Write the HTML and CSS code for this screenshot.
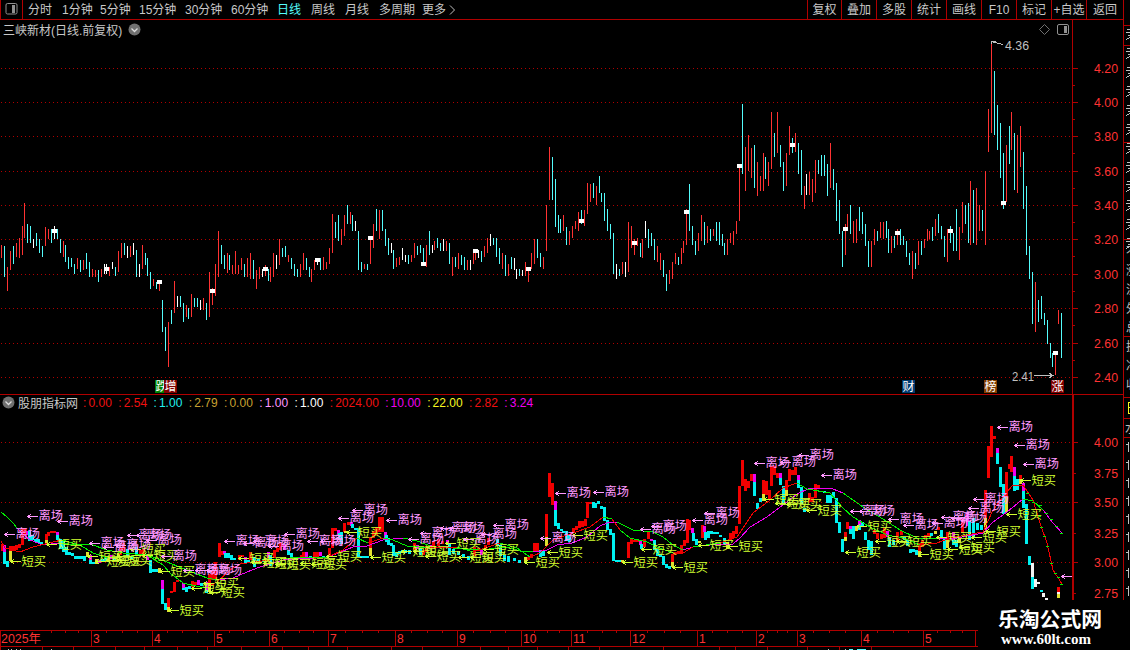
FILE: index.html
```html
<!DOCTYPE html>
<html lang="zh-CN">
<head>
  <meta charset="UTF-8">
  <title>三峡新材 日线</title>
  <link rel="stylesheet" href="styles.css">
</head>
<body>
  <div class="app">
    <div class="main">
      <!-- Toolbar -->
      <div class="toolbar">
        <div class="layout-btn">
          <svg width="13" height="12" viewBox="0 0 13 12"><rect x="1" y="0.5" width="11" height="10.5" rx="1.5" fill="none" stroke="#909090"/><rect x="7" y="2" width="3" height="8" fill="#909090"/></svg>
        </div>
        <div class="periods">
          <span class="p2">分时</span>
          <span class="p3">1分钟</span>
          <span class="p4">5分钟</span>
          <span class="p5">15分钟</span>
          <span class="p5">30分钟</span>
          <span class="p5">60分钟</span>
          <span class="p2 active">日线</span>
          <span class="p2">周线</span>
          <span class="p2">月线</span>
          <span class="p6">多周期</span>
          <span class="more">更多</span>
          <svg width="7" height="12" viewBox="0 0 7 12"><path d="M1 1.5L5.5 6L1 10.5" fill="none" stroke="#c0c0c0"/></svg>
        </div>
        <div class="tools">
          <span class="first">复权</span>
          <span>叠加</span>
          <span>多股</span>
          <span>统计</span>
          <span>画线</span>
          <span>F10</span>
          <span>标记</span>
          <span>+自选</span>
          <span class="last">返回</span>
        </div>
      </div>

      <!-- Price chart -->
      <div class="title-row">
        <div class="title">
          <span class="name">三峡新材(日线.前复权)</span>
          <svg width="13" height="13" viewBox="0 0 13 13"><circle cx="6.5" cy="6.5" r="6" fill="#707070"/><path d="M3.5 5.5L6.5 8.5L9.5 5.5" fill="none" stroke="#ddd" stroke-width="1.3"/></svg>
          <svg class="corner" width="32" height="13" viewBox="0 0 32 13"><path d="M6.5 1.5L11.5 6.5L6.5 11.5L1.5 6.5Z" fill="none" stroke="#707070"/><rect x="19.5" y="1.5" width="11" height="10" rx="1.5" fill="none" stroke="#909090"/><rect x="26" y="3" width="3" height="7" fill="#909090"/></svg>
        </div>
      </div>
      <svg class="price" id="price" width="1123" height="357" viewBox="0 37 1123 357"></svg>

      <!-- Indicator chart -->
      <div class="ind-row">
        <div class="ind">
          <svg width="13" height="13" viewBox="0 0 13 13"><circle cx="6.5" cy="6.5" r="6" fill="#707070"/><path d="M3.5 5.5L6.5 8.5L9.5 5.5" fill="none" stroke="#ddd" stroke-width="1.3"/></svg>
          <span class="ind-name">股朋指标网</span>
          <span class="v red"><i>:</i>0.00</span>
          <span class="v red"><i>:</i>2.54</span>
          <span class="v cyan"><i>:</i>1.00</span>
          <span class="v gold"><i>:</i>2.79</span>
          <span class="v gold"><i>:</i>0.00</span>
          <span class="v pink"><i>:</i>1.00</span>
          <span class="v white"><i>:</i>1.00</span>
          <span class="v red"><i>:</i>2024.00</span>
          <span class="v magenta"><i>:</i>10.00</span>
          <span class="v yellow"><i>:</i>22.00</span>
          <span class="v red"><i>:</i>2.82</span>
          <span class="v magenta"><i>:</i>3.24</span>
        </div>
      </div>
      <svg class="indicator" id="indicator" width="1123" height="218" viewBox="0 412 1123 218"></svg>
      <svg class="time" id="time" width="1123" height="20" viewBox="0 630 1123 20"></svg>
    </div>
    <svg class="side" id="side" width="7" height="650" viewBox="1123 0 7 650"></svg>
  </div>

  <div class="watermark">
    <div class="wm-name">乐淘公式网</div>
    <div class="wm-url">www.60lt.com</div>
  </div>

  <script src="chart.js"></script>
</body>
</html>
```

FILE: styles.css
```css
* {
  margin: 0;
  padding: 0;
  box-sizing: border-box;
}

body {
  width: 1130px;
  height: 650px;
  background: #000;
  color: #c8c8c8;
  font-family: "Liberation Sans", "Noto Sans CJK SC", sans-serif;
  font-size: 12px;
  overflow: hidden;
}

svg {
  display: block;
  flex: none;
}

.app {
  display: flex;
  width: 1130px;
  height: 650px;
}

.main {
  width: 1123px;
  display: flex;
  flex-direction: column;
}

/* Toolbar */
.toolbar {
  display: flex;
  height: 20px;
  line-height: 18px;
  border-bottom: 1px solid #b00000;
  white-space: nowrap;
}

.layout-btn {
  width: 23px;
  padding: 3px 0 0 4px;
  border-left: 1px solid #b00000;
  border-right: 1px solid #b00000;
}

.periods {
  display: flex;
  align-items: center;
  width: 784px;
  padding-left: 5px;
}

.p2 { width: 34px; }
.p3 { width: 38px; }
.p4 { width: 39px; }
.p5 { width: 46px; }
.p6 { width: 43px; }
.more { width: 27px; }

.active {
  color: #54fcfc;
}

.tools {
  display: flex;
  line-height: 20px;
}

.tools span {
  width: 35px;
  height: 19px;
  border-left: 1px solid #b00000;
  text-align: center;
}

.tools .first { width: 34px; }
.tools .last { width: 37px; }

/* Chart headers */
.title-row {
  height: 17px;
}

.title {
  display: flex;
  align-items: center;
  width: 1073px;
  height: 17px;
  padding: 1px 2px 0 3px;
  border-right: 1px solid #b00000;
}

.name {
  width: 125px;
  white-space: nowrap;
}

.corner {
  margin-left: auto;
}

.ind-row {
  height: 18px;
  border-top: 1px solid #b00000;
}

.ind {
  display: flex;
  align-items: center;
  width: 1074px;
  height: 17px;
  padding: 0 0 2px 2px;
  border-right: 2px solid #b00000;
}

.ind-name {
  width: 68px;
  padding-left: 3px;
  white-space: nowrap;
}

.v {
  margin-right: 6.3px;
  letter-spacing: 0.05px;
}

.v i {
  margin-right: 2px;
  font-style: normal;
}

.red { color: #f01010; }
.cyan { color: #20f0f0; }
.gold { color: #c8a030; }
.pink { color: #ff98ff; }
.white { color: #fff; }
.magenta { color: #f000f0; }
.yellow { color: #f8f820; }

/* SVG charts */
.price, .indicator, .time, .side {
  shape-rendering: crispEdges;
}

.axis { fill: #ff3232; }
.note { fill: #c0c0c0; }
.sell { fill: #ff98ff; }
.buy { fill: #d0ff30; }
.mark { fill: #fff; }

.watermark {
  position: absolute;
  left: 978px;
  top: 600px;
  width: 152px;
  height: 50px;
  padding: 5px 0 0 20px;
  background: #000;
  color: #fff;
}

.wm-name {
  font: bold 20.8px/26px "Noto Sans CJK SC", sans-serif;
  white-space: nowrap;
}

.wm-url {
  padding: 1px 0 0 3px;
  font: bold 15px/14px "Liberation Serif", serif;
}
```

FILE: chart.js
```javascript
const COLORS = {
  r: '#ff3232', c: '#54fcfc', w: '#ffffff',
  R: '#f00000', C: '#00f0f0', M: '#f000f0', Y: '#e0e030', W: '#f4f4f4', G: '#00f000'
};
const LINE = '#b00000';

function rect(x, y, w, h, color) {
  return `<rect x="${x}" y="${y}" width="${w}" height="${h}" fill="${color}"/>`;
}

function text(x, y, str, cls, len) {
  const fit = len ? ` textLength="${len}" lengthAdjust="spacingAndGlyphs"` : '';
  return `<text x="${x}" y="${y}" class="${cls}"${fit}>${str}</text>`;
}

function grid(y) {
  return `<path d="M1 ${y + 0.5}H1071" stroke="${LINE}" stroke-dasharray="1 3"/>`;
}

// x, top, bottom, color
function bars(data, width) {
  return data.trim().split(/\s*,\s*/).map((s) => {
    const [x, a, b, c] = s.split(' ');
    return rect(x, a, width, b - a, COLORS[c]);
  }).join('');
}

/* Price chart */
const candles = `
1 245 258 r,4 246 277 c,7 267 291 r,10 251 270 r,13 246 264 c,16 243 257 r,19 238 258 r,22 226 255 r,24 203 238 r,27 224 243 c,
30 226 243 c,33 239 248 w,36 233 246 c,39 239 253 c,42 246 257 c,45 227 246 r,48 229 239 r,51 229 243 c,54 226 239 w,57 229 239 c,
60 239 253 c,63 241 257 r,65 245 262 c,68 257 269 c,71 258 267 c,74 264 274 c,77 258 269 r,80 260 272 c,83 260 270 r,86 253 269 c,
89 262 277 c,92 269 277 r,95 270 277 r,98 270 282 c,101 269 277 r,104 264 274 w,106 264 274 w,109 267 276 r,112 262 269 w,115 267 276 c,
118 251 272 r,121 243 258 r,124 243 255 c,127 246 258 w,130 246 257 r,133 243 255 w,136 250 277 c,139 264 277 w,142 245 269 r,145 253 265 c,
147 258 276 c,150 272 289 c,153 279 286 r,156 282 289 c,159 280 291 r,162 300 332 c,165 327 351 c,168 322 367 r,171 310 324 c,174 281 313 r,
177 296 307 w,180 296 307 c,183 303 322 c,186 305 317 r,188 308 319 c,191 294 317 r,194 298 307 c,197 298 307 c,200 300 310 w,203 298 310 r,
206 303 320 c,209 272 317 r,212 288 305 r,215 264 296 r,218 231 277 r,221 245 264 c,224 255 269 c,227 253 273 r,229 255 270 c,232 265 274 r,
235 251 274 r,238 265 274 r,241 258 270 r,244 264 277 c,247 258 277 r,250 253 279 r,253 260 279 c,256 270 289 r,259 267 279 r,262 269 277 w,
265 265 276 r,268 269 281 c,270 267 282 r,273 253 277 r,276 255 269 w,279 239 265 r,282 248 257 c,285 246 257 c,288 255 262 r,291 258 269 c,
294 264 276 c,297 269 277 c,300 264 277 r,303 253 270 r,306 258 270 c,309 267 277 c,311 269 282 r,314 260 270 r,317 258 265 w,320 258 270 c,
323 257 270 r,326 262 269 r,329 248 264 r,332 214 253 r,335 222 238 c,338 215 241 c,341 229 245 r,344 215 236 r,347 205 224 c,350 212 224 r,
352 215 231 c,355 221 231 w,358 231 270 c,361 262 272 c,364 264 269 r,367 264 270 c,370 238 264 r,373 224 248 r,376 209 231 c,379 210 239 r,
382 210 231 c,385 229 246 c,388 238 255 c,391 243 253 w,393 250 269 c,396 258 267 r,399 257 265 r,402 248 260 w,405 255 262 w,408 255 264 c,
411 255 262 r,414 243 258 r,417 246 255 c,420 245 253 c,423 248 266 c,426 245 267 r,429 231 255 c,432 245 253 w,434 241 250 r,437 238 248 c,
440 243 251 c,443 239 251 w,446 241 251 r,449 243 264 c,452 257 276 r,455 257 267 c,458 253 269 r,461 255 265 c,464 257 270 c,467 260 270 r,
470 260 270 w,473 250 264 r,475 249 260 r,478 250 258 w,481 251 262 c,484 246 257 r,487 238 253 r,490 234 246 w,493 238 245 c,496 238 257 c,
499 248 264 c,502 253 269 r,505 255 276 c,508 264 276 r,511 257 269 c,514 258 270 w,516 269 279 w,519 269 276 c,522 270 276 w,525 262 276 r,
528 270 282 r,531 253 269 r,534 239 264 r,537 239 258 c,540 253 267 c,543 257 269 r,546 205 251 r,549 147 200 r,552 157 200 c,555 179 227 c,
558 215 233 c,560 219 233 c,563 215 231 r,566 227 245 c,569 231 245 r,572 226 238 r,575 221 229 r,578 212 231 r,581 210 224 c,584 210 226 r,
587 183 214 r,590 184 202 r,593 183 198 c,596 186 205 r,599 176 193 c,601 193 202 c,604 193 221 c,607 209 231 c,610 224 239 c,613 233 274 c,
616 264 279 w,619 269 276 c,622 262 274 r,625 262 277 w,628 222 272 r,631 226 248 r,634 239 255 r,637 238 246 r,640 243 257 c,642 239 258 r,
645 221 238 w,648 229 248 c,651 233 246 c,654 239 260 c,657 246 262 r,660 253 270 r,663 260 277 c,666 274 291 c,669 270 284 r,672 262 279 r,
675 253 264 r,678 257 265 c,681 248 264 r,683 241 253 r,686 209 245 r,689 184 231 c,692 226 245 c,695 241 255 c,698 233 251 r,701 215 241 r,
704 222 245 c,707 226 243 r,710 229 241 c,713 229 236 r,716 222 241 c,719 222 245 c,722 234 246 c,724 243 255 c,727 239 255 r,730 233 243 r,
733 231 245 r,736 221 234 r,739 164 221 r,742 104 174 c,745 147 191 r,748 135 171 r,751 148 178 r,754 145 188 c,757 162 196 r,760 176 191 r,
763 153 191 r,765 157 179 c,768 162 186 r,771 112 169 r,774 133 157 c,777 112 153 r,780 145 167 c,783 162 191 c,786 153 186 r,789 126 155 r,
792 138 153 c,795 133 152 r,798 143 174 c,801 150 195 c,804 186 209 r,806 174 195 w,809 172 195 r,812 179 202 r,815 160 193 r,818 160 174 c,
821 155 176 c,824 155 176 c,827 164 196 c,830 143 188 r,833 169 190 c,836 183 221 c,839 200 234 c,842 231 267 c,845 224 255 r,847 214 229 r,
850 205 234 c,853 221 243 r,856 219 243 r,859 207 231 c,862 212 234 c,865 224 246 c,868 241 267 c,871 241 267 r,874 229 245 r,877 231 241 c,
880 222 238 r,883 222 239 r,886 221 238 c,888 229 253 c,891 236 253 r,894 236 248 c,897 229 245 r,900 229 245 c,903 236 245 c,906 241 257 c,
909 253 265 c,912 251 279 r,915 253 269 c,918 241 265 r,921 241 255 c,924 239 248 r,927 229 241 r,929 231 239 r,932 227 241 c,935 219 236 r,
938 214 233 c,941 226 239 c,944 236 257 c,947 229 262 r,950 226 243 c,953 233 251 c,956 209 251 c,959 227 260 r,962 202 233 r,965 205 224 c,
968 203 243 c,970 181 245 r,973 190 243 c,976 188 245 r,979 205 231 r,982 210 231 c,985 171 245 r,988 109 152 r,991 42 133 r,994 71 135 c,
997 105 150 c,1000 123 178 c,1003 153 209 c,1006 145 202 r,1009 126 164 c,1011 112 150 r,1014 133 190 c,1017 135 193 r,1020 126 167 r,1023 152 209 c,
1026 186 255 c,1029 246 279 c,1032 272 324 c,1035 282 332 r,1038 300 322 c,1041 296 319 c,1044 313 325 c,1047 320 344 c,1050 343 358 c,1052 353 367 c,
1055 354 375 r,1058 310 324 r,1061 313 358 c`;

const dots = [[54, 229], [106, 267], [159, 280], [212, 289], [265, 267], [317, 258], [370, 236], [423, 262], [475, 249],
  [528, 267], [581, 219], [634, 241], [686, 210], [739, 164], [792, 143], [845, 227], [897, 231], [950, 229], [1003, 201], [1055, 351]];

const priceTicks = [68, 102, 136, 171, 205, 239, 274, 308, 343, 377];

let out = '';
priceTicks.forEach((y, i) => {
  out += grid(y);
  out += rect(1073, y, 5, 1, LINE);
  if (i < 9) out += rect(1073, y + 17, 2, 1, LINE);
  out += text(1094, y + 5, (4.2 - i * 0.2).toFixed(2), 'axis', 24);
});
out += rect(1072, 37, 1, 357, LINE);
out += bars(candles, 1);
dots.forEach(([x, y]) => { out += rect(x - 2, y, 5, 4, '#fff'); });

// high and low marks
out += '<path d="M991.5 41.5L1003 44.5M991.5 44V41H996" fill="none" stroke="#c0c0c0"/>';
out += text(1005, 50, '4.36', 'note', 24);
out += '<path d="M1034 375.5H1053M1049 373L1053 375.5L1049 378" fill="none" stroke="#c0c0c0"/>';
out += text(1012, 381, '2.41', 'note', 22);

// event badges
[[155, '跌', '#008000'], [164, '增', '#800000'], [902, '财', '#003a70'], [984, '榜', '#803c00'], [1051, '涨', '#800000']].forEach(([x, ch, bg]) => {
  out += rect(x, 380, 13, 13, bg) + text(x + 0.5, 391, ch, 'mark');
});
document.getElementById('price').innerHTML = out;

/* Indicator chart */
const steps = `
1 544 551 R,3 545 552 M,3 552 564 C,6 561 567 C,9 551 561 Y,9 546 551 R,12 546 550 R,15 545 550 R,18 544 548 R,21 528 545 R,24 528 535 R,
26 531 535 M,28 531 541 C,31 535 540 C,34 539 542 C,37 539 543 C,40 542 545 C,45 534 540 R,45 540 544 Y,47 532 536 R,50 531 533 R,53 531 533 R,
56 532 535 M,56 535 540 C,59 539 549 C,62 540 552 C,65 547 555 C,68 552 555 C,71 553 556 C,74 556 559 C,77 556 559 C,80 556 559 C,83 556 561 C,
86 552 557 Y,89 555 560 M,89 560 564 C,92 562 564 C,95 559 564 Y,98 560 563 M,101 559 562 C,104 558 561 C,107 556 560 R,110 555 559 M,113 557 561 C,
117 553 558 Y,119 548 555 R,122 543 551 R,126 549 557 C,130 556 559 C,135 547 555 C,139 550 556 R,142 549 557 R,146 554 560 M,149 560 573 C,
152 569 572 C,155 569 572 C,158 568 573 Y,161 580 589 M,161 589 604 C,164 603 610 C,167 598 607 R,167 607 612 Y,170 591 593 R,173 582 592 R,
176 580 582 R,182 583 588 M,182 588 590 C,185 587 592 C,188 586 589 C,191 581 587 R,194 582 585 R,197 580 585 M,200 583 586 C,205 582 590 M,
205 590 593 C,208 574 583 R,208 583 592 Y,211 570 580 R,214 562 580 R,218 543 557 R,221 551 555 R,223 551 554 M,224 553 558 C,227 553 558 C,
230 555 560 C,233 558 560 C,238 555 560 R,241 555 557 R,244 557 560 M,244 560 563 C,247 560 563 C,249 552 560 R,253 557 567 C,257 559 562 C,
262 559 562 C,267 552 558 M,269 555 566 C,273 550 558 R,276 548 552 R,279 543 550 R,283 545 550 M,287 550 555 C,290 553 558 C,294 557 560 C,
300 555 560 R,302 552 558 R,305 552 557 M,309 556 558 C,313 552 560 R,316 552 557 R,319 552 556 M,322 556 558 C,328 548 557 R,331 528 548 R,
334 528 531 R,337 530 534 M,338 533 540 C,340 532 544 C,343 523 532 R,344 531 533 Y,347 522 525 R,350 522 526 M,351 524 528 C,354 528 530 C,
357 528 557 C,360 556 558 C,363 556 558 C,366 556 558 C,369 537 548 R,369 548 556 Y,372 531 538 R,375 527 535 R,378 517 532 R,381 517 532 R,
384 532 538 M,385 535 542 C,387 538 545 C,390 543 546 C,392 545 556 C,395 552 557 C,398 551 554 C,401 550 553 C,404 550 553 C,408 550 554 C,
413 543 550 R,416 545 549 M,419 548 555 C,422 550 555 R,425 546 552 R,429 545 549 M,432 541 548 R,437 539 546 R,441 541 544 R,446 540 545 M,
448 543 555 C,452 549 554 C,457 551 555 C,462 554 558 C,467 556 560 C,473 547 556 R,477 548 551 R,480 550 555 M,484 545 550 R,487 538 545 R,
496 539 546 C,499 545 556 C,503 555 561 C,507 556 562 C,513 558 561 C,518 560 563 C,524 557 562 Y,527 557 560 R,530 554 558 R,533 543 551 R,
536 543 552 R,539 550 557 C,542 551 556 C,545 514 537 R,545 537 546 Y,548 473 497 R,551 483 505 R,554 501 510 M,554 510 526 C,557 523 529 C,
560 529 531 C,562 531 533 C,565 531 541 C,568 535 542 C,572 528 533 R,575 526 530 R,578 521 528 R,581 521 527 R,584 519 526 R,586 502 518 R,
589 502 504 R,592 502 508 C,594 503 508 C,597 501 504 C,600 506 509 C,603 507 521 C,606 520 530 C,609 529 535 C,612 533 561 C,615 560 562 C,
618 560 562 C,621 560 562 Y,627 542 558 R,630 538 544 R,633 540 542 R,636 540 542 R,639 540 545 M,640 544 549 C,643 539 547 R,647 532 539 R,
650 539 541 M,653 540 550 C,656 549 556 C,659 554 557 C,662 556 565 C,665 564 568 C,668 566 569 C,671 554 562 R,671 562 567 Y,674 552 555 R,
677 551 554 R,680 545 554 R,683 540 546 R,686 519 543 R,688 520 530 R,691 528 533 M,692 533 541 C,695 539 545 C,698 541 543 Y,701 525 538 R,
703 526 532 M,704 532 540 C,707 531 538 C,710 531 534 C,713 532 534 C,716 532 534 C,719 535 537 C,723 538 545 C,726 542 549 Y,729 533 540 R,
732 531 538 R,735 526 534 R,738 486 524 R,741 460 486 R,744 479 491 R,747 481 488 R,750 474 481 R,753 474 482 M,753 482 496 C,756 503 509 C,
759 498 502 C,762 480 494 R,762 494 501 Y,765 481 495 R,768 490 500 R,770 466 486 R,773 466 475 R,776 473 478 R,779 473 478 M,779 478 485 C,
782 486 505 C,785 480 490 R,785 490 496 Y,788 469 481 R,791 470 475 R,794 467 475 R,797 475 480 M,797 480 488 C,800 487 504 C,803 508 512 C,
808 493 502 R,811 497 502 R,814 484 498 R,817 485 488 R,823 491 493 C,826 495 503 C,829 495 503 C,832 492 498 C,835 498 523 C,838 522 533 C,
841 539 552 C,844 532 537 R,844 537 541 Y,846 522 529 R,849 526 529 M,849 529 534 C,852 526 539 C,855 526 531 Y,858 520 525 M,858 525 530 C,
861 522 527 C,864 532 540 C,867 540 550 C,870 541 555 C,873 530 534 R,876 533 539 R,880 534 539 R,883 528 538 R,886 531 537 M,888 537 547 C,
892 540 545 C,896 532 541 R,900 531 535 R,903 537 540 C,906 540 546 C,909 549 553 C,912 549 552 C,915 550 555 C,918 543 551 R,918 551 557 Y,
921 540 547 R,924 535 538 R,927 533 537 R,930 533 536 C,934 531 534 Y,937 527 530 R,940 530 537 C,943 537 549 C,946 532 540 R,946 540 548 Y,
952 532 540 M,952 540 545 C,955 540 547 C,958 536 543 Y,961 518 533 R,966 513 526 M,968 521 540 C,972 518 538 C,976 523 530 C,980 525 530 C,
984 490 518 R,984 518 530 Y,987 446 478 R,990 426 457 R,993 436 439 R,996 448 453 M,996 453 464 C,999 467 487 C,1002 484 514 C,1005 472 497 R,
1005 497 512 Y,1008 464 469 R,1010 456 472 R,1013 467 476 M,1013 476 491 C,1016 479 490 C,1019 475 479 R,1019 479 484 Y,1022 483 491 M,
1022 491 508 C,1025 504 544 C,1028 556 565 C,1031 563 577 W,1031 577 589 C,1034 579 587 W,1037 582 584 W,1040 590 592 C,1042 593 597 W,
1045 598 600 W,1057 587 592 R,1057 592 594 W,1057 594 598 Y`;

// moving averages, split where the colour turns
const averages = [
  ['G', '1,512 7,517 13,523 17,528'], ['M', '17,528 23,534 30,540 43,545 60,543'],
  ['G', '60,543 75,545 90,544 107,550 123,553 147,555 167,562 187,570 207,578 217,580'],
  ['M', '217,580 233,578 247,572 260,567 283,560 328,557 353,547 367,546 383,540 403,538'],
  ['G', '403,538 417,541 433,547 453,548 480,550 507,547 520,551 533,552'],
  ['M', '533,552 547,550 557,545 572,543 587,537 600,526 607,523 617,522'],
  ['G', '617,522 633,530 653,532 663,537 673,545 683,550'],
  ['M', '683,550 693,547 710,545 733,544 740,538 750,527 767,517 783,505 797,494 810,488 833,489 843,493'],
  ['G', '843,493 863,507 883,519 900,530 917,538 937,539'],
  ['M', '937,539 957,538 983,533 993,522 1007,512 1023,499'],
  ['G', '1023,499 1033,501 1043,510'], ['M', '1043,510 1053,523 1062,533'],
  ['R', '1,541 5,548 20,552 33,547 53,542 62,540'],
  ['G', '62,540 80,545 93,553 107,558 147,555 163,565 170,573 183,583 200,587 208,587'],
  ['R', '208,587 217,582 230,570 240,564 270,560'], ['G', '270,560 290,558 328,557'],
  ['R', '328,557 343,550 357,538'], ['G', '357,538 368,543'], ['R', '368,543 383,538'],
  ['G', '383,538 393,540 407,546 430,548'], ['R', '430,548 457,547'], ['G', '457,547 473,552'], ['R', '473,552 500,543'],
  ['G', '500,543 517,548 530,557'], ['R', '530,557 540,553 553,540 573,533 590,527 603,517'],
  ['G', '603,517 612,519'], ['R', '612,519 620,530'], ['G', '620,530 630,538 647,542 657,547 673,553'],
  ['R', '673,553 683,553 693,547'], ['G', '693,547 720,543'], ['R', '720,543 737,537 753,513 770,500 783,488 797,483'],
  ['G', '797,483 807,489 830,493 843,508 853,517 870,527 887,535 903,538 920,545'],
  ['R', '920,545 937,543 950,538 983,532 993,510 1003,497 1012,486 1023,485 1033,500 1040,523 1047,543 1053,570 1062,584']
];

// arrow x, arrow y
const sells = [[28, 516], [58, 521], [5, 534], [90, 543], [128, 535], [137, 535], [147, 540], [116, 545], [104, 547], [162, 556],
  [184, 570], [196, 570], [207, 570], [225, 541], [244, 543], [254, 541], [285, 534], [269, 546], [308, 541], [321, 541],
  [339, 518], [353, 510], [387, 520], [409, 539], [421, 533], [441, 528], [450, 528], [494, 525], [482, 534], [464, 539],
  [556, 493], [594, 492], [541, 538], [641, 529], [652, 526], [693, 520], [705, 513], [755, 463], [781, 462], [799, 455],
  [822, 475], [851, 511], [860, 511], [889, 519], [904, 525], [933, 523], [942, 517], [952, 518], [974, 499], [969, 508],
  [998, 427], [1015, 445], [1024, 464]];
const buys = [[11, 561], [47, 544], [88, 556], [96, 561], [107, 560], [117, 560], [131, 549], [143, 555], [160, 571], [169, 610],
  [192, 588], [204, 583], [210, 592], [239, 558], [252, 562], [264, 563], [276, 564], [301, 563], [312, 564], [327, 556],
  [347, 532], [371, 557], [402, 551], [414, 551], [426, 556], [446, 543], [459, 557], [471, 557], [484, 549], [525, 562],
  [548, 552], [573, 535], [623, 562], [642, 549], [673, 567], [699, 545], [728, 546], [764, 499], [776, 503], [787, 504],
  [807, 510], [857, 526], [846, 552], [876, 541], [897, 541], [919, 554], [937, 537], [948, 549], [960, 547], [972, 537],
  [986, 531], [1007, 514], [1021, 480]];

function arrow(x, y, color) {
  return `<path d="M${x} ${y + 0.5}H${x + 10}M${x + 3} ${y - 2}L${x} ${y + 0.5}L${x + 3} ${y + 3}" fill="none" stroke="${color}"/>`;
}

out = '';
[442, 502, 562].forEach((y) => { out += grid(y); });
[442, 473, 502, 533, 562, 593].forEach((y, i) => {
  out += rect(1074, y, i % 2 ? 2 : 4, 1, LINE);
  out += text(1094, y + 5, (4 - i * 0.25).toFixed(2), 'axis', 24);
});
out += rect(1072, 412, 2, 188, LINE);
out += bars(steps, 3);
averages.forEach(([c, pts]) => {
  out += `<polyline points="${pts}" fill="none" stroke="${COLORS[c]}"/>`;
});
// green flecks along the falling lines
[[1026, 493], [1032, 502], [1038, 516], [1040, 527], [1043, 536], [1046, 546], [1050, 563], [1054, 573], [1057, 577], [1060, 584],
  [1039, 505], [1045, 513], [1050, 519], [1055, 526], [1060, 533]].forEach(([x, y]) => { out += rect(x, y, 3, 1, COLORS.G); });
buys.forEach(([x, y]) => { out += arrow(x, y, '#d0ff30') + text(x + 10.5, y + 5, '短买', 'buy', 24.5); });
sells.forEach(([x, y]) => { out += arrow(x, y, '#ff98ff') + text(x + 10.5, y + 4, '离场', 'sell', 24.5); });
out += arrow(1062, 576, '#ff98ff');
document.getElementById('indicator').innerHTML = out;

/* Time axis */
const months = [[91, '3'], [152, '4'], [214, '5'], [269, '6'], [328, '7'], [395, '8'], [457, '9'], [521, '10'], [571, '11'],
  [630, '12'], [697, '1'], [756, '2'], [797, '3'], [861, '4'], [923, '5'], [975, '']];
const weeks = [51, 65, 78, 106, 122, 137, 167, 182, 197, 229, 243, 255, 284, 299, 313, 345, 362, 378, 411, 427, 442, 473, 490, 505,
  534, 547, 559, 587, 602, 616, 647, 664, 680, 712, 727, 742, 767, 777, 787, 813, 829, 845, 877, 893, 908, 937, 950, 962];
const tabs = [0, 42, 73, 115, 144, 177, 207, 241, 282, 308, 347, 391, 422, 480, 508, 537, 568, 599, 663, 719, 735, 767, 807, 839, 871];

out = rect(0, 630, 978, 1, LINE) + rect(0, 646, 978, 1, LINE) + rect(0, 630, 1, 20, LINE);
out += text(1, 643, '2025年', 'axis', 40);
months.forEach(([x, m]) => { out += rect(x, 630, 1, 16, LINE) + text(x + 2, 643, m, 'axis'); });
weeks.forEach((x) => { out += rect(x, 631, 1, 2, LINE); });
tabs.forEach((x) => { out += rect(x, 647, 1, 3, LINE); });
[8, 11, 16, 20, 51, 828, 845].forEach((x) => { out += rect(x, 649, 1, 1, '#c0c0c0'); });
out += rect(849, 649, 4, 1, '#54fcfc') + rect(857, 649, 9, 1, '#54fcfc');
document.getElementById('time').innerHTML = out;

/* Edge of the quote panel */
out = rect(1123, 0, 1, 394, LINE) + rect(1122, 394, 2, 206, LINE) + rect(1073, 394, 50, 2, LINE);
[25, 45, 142, 239, 336, 397, 418, 437].forEach((y) => { out += rect(1124, y, 6, 1, LINE); });
for (let y = 29; y < 240; y += 19) {
  out += `<path d="M1127 ${y + 0.5}H1130M1126 ${y + 3.5}H1130M1128 ${y + 6.5}H1130M1126 ${y + 10.5}L1130 ${y + 8.5}" stroke="#c0c0c0" fill="none"/>`;
}
['不', '涨', '流', '外', '总', '换', '净', '收'].forEach((ch, i) => { out += text(1126, 256 + i * 19, ch, 'note'); });
out += '<path d="M1130 402H1128V413H1130M1128 407H1130" stroke="#f8f820" fill="none"/>';
out += text(1125, 433, '水', 'note');
for (let y = 442; y < 600; y += 18) {
  out += `<path d="M1126 ${y + 2}H1129M1128.5 ${y}V${y + 10}" stroke="#c0c0c0" fill="none"/>`;
}
document.getElementById('side').innerHTML = out;
```
